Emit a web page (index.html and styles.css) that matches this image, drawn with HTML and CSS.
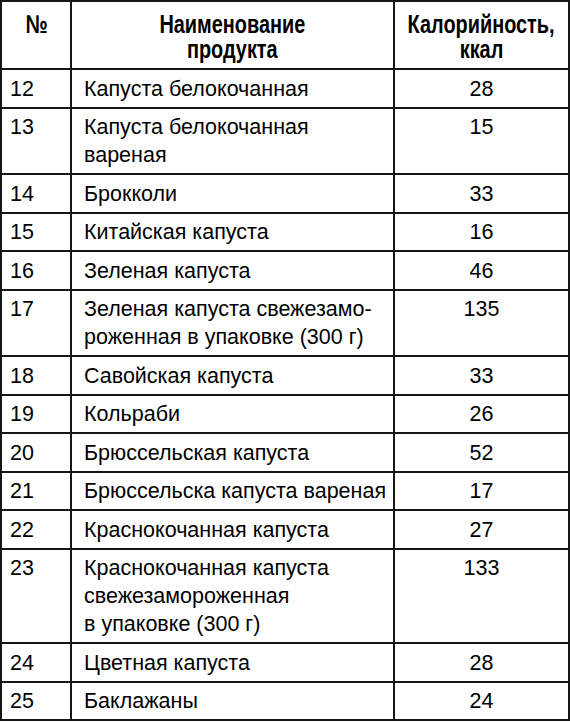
FILE: index.html
```html
<!DOCTYPE html>
<html lang="ru">
<head>
<meta charset="utf-8">
<title>Калорийность капусты</title>
<link rel="stylesheet" href="styles.css">
</head>
<body>
<table class="kcal">
  <thead>
    <tr>
      <th class="c-num"><div class="hd"><span>№</span></div></th>
      <th class="c-name"><div class="hd"><span>Наименование</span><span>продукта</span></div></th>
      <th class="c-val"><div class="hd"><span>Калорийность,</span><span>ккал</span></div></th>
    </tr>
  </thead>
  <tbody>
    <tr><td class="c-num">12</td><td class="c-name">Капуста белокочанная</td><td class="c-val">28</td></tr>
    <tr><td class="c-num">13</td><td class="c-name">Капуста белокочанная<br>вареная</td><td class="c-val">15</td></tr>
    <tr><td class="c-num">14</td><td class="c-name">Брокколи</td><td class="c-val">33</td></tr>
    <tr><td class="c-num">15</td><td class="c-name">Китайская капуста</td><td class="c-val">16</td></tr>
    <tr><td class="c-num">16</td><td class="c-name">Зеленая капуста</td><td class="c-val">46</td></tr>
    <tr><td class="c-num">17</td><td class="c-name">Зеленая капуста свежезамо-<br>роженная в упаковке (300 г)</td><td class="c-val">135</td></tr>
    <tr><td class="c-num">18</td><td class="c-name">Савойская капуста</td><td class="c-val">33</td></tr>
    <tr><td class="c-num">19</td><td class="c-name">Кольраби</td><td class="c-val">26</td></tr>
    <tr><td class="c-num">20</td><td class="c-name">Брюссельская капуста</td><td class="c-val">52</td></tr>
    <tr><td class="c-num">21</td><td class="c-name">Брюссельска капуста вареная</td><td class="c-val">17</td></tr>
    <tr><td class="c-num">22</td><td class="c-name">Краснокочанная капуста</td><td class="c-val">27</td></tr>
    <tr><td class="c-num">23</td><td class="c-name">Краснокочанная капуста<br>свежезамороженная<br>в упаковке (300 г)</td><td class="c-val">133</td></tr>
    <tr><td class="c-num">24</td><td class="c-name">Цветная капуста</td><td class="c-val">28</td></tr>
    <tr><td class="c-num">25</td><td class="c-name">Баклажаны</td><td class="c-val">24</td></tr>
  </tbody>
</table>
</body>
</html>
```
FILE: styles.css
```css
html, body {
  margin: 0;
  padding: 0;
  background: #fff;
}

.kcal {
  width: 570px;
  table-layout: fixed;
  border-collapse: separate;
  border-spacing: 0;
  border-top: 2px solid #151515;
  border-left: 2px solid #151515;
  color: #000;
  font-family: "Liberation Sans", Arial, sans-serif;
}

.kcal th,
.kcal td {
  border-right: 2px solid #151515;
  border-bottom: 2px solid #151515;
  vertical-align: top;
  padding: 0;
}

.kcal th {
  height: 68px;
  box-sizing: border-box;
  padding-top: 9.5px;
  overflow: visible;
}

.hd {
  display: flex;
  flex-direction: column;
  align-items: center;
  font-weight: bold;
  font-size: 26px;
  line-height: 25px;
  white-space: nowrap;
}

.hd span {
  display: block;
  transform: scaleX(0.765);
  transform-origin: center;
}

.kcal td {
  font-size: 21.5px;
  line-height: 28px;
  padding-top: 4.5px;
  padding-bottom: 4px;
}

.kcal .c-num {
  width: 70px;
}

.kcal td.c-num {
  padding-left: 8px;
  text-align: left;
}

.kcal .c-name {
  width: 323px;
}

.kcal td.c-name {
  padding-left: 12px;
  text-align: left;
}

.kcal .c-val {
  text-align: center;
}
```
